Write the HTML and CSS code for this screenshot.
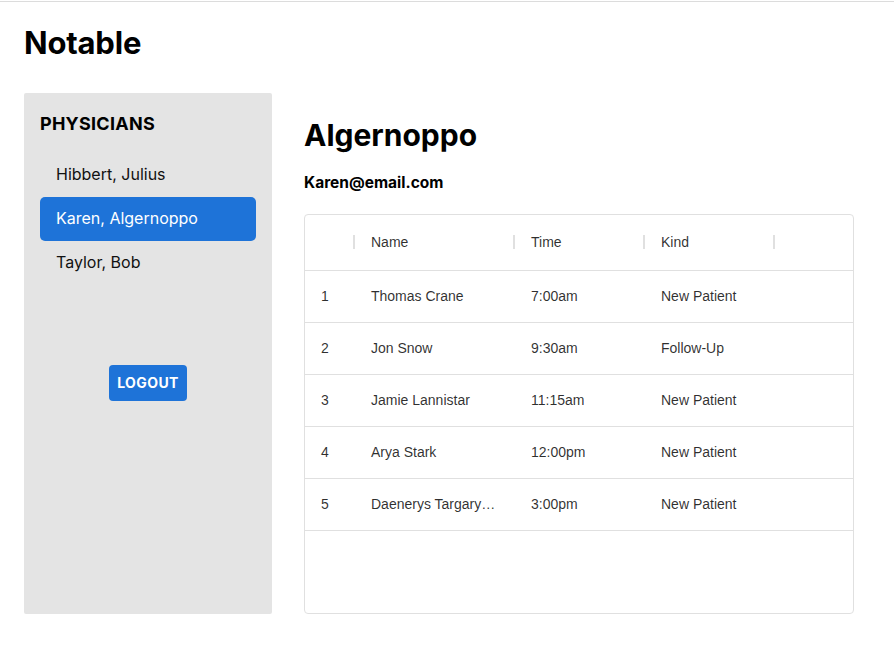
FILE: index.html
```html
<!DOCTYPE html>
<html>
<head>
<meta charset="utf-8">
<link rel="stylesheet" href="styles.css">
</head>
<body>
<div class="topline"></div>
<div class="page">
  <h1 class="brand">Notable</h1>
  <div class="layout">
    <aside class="sidebar">
      <h2 class="side-title">PHYSICIANS</h2>
      <ul class="phys-list">
        <li class="phys">Hibbert, Julius</li>
        <li class="phys active">Karen, Algernoppo</li>
        <li class="phys">Taylor, Bob</li>
      </ul>
      <div class="logout-wrap"><button class="logout">LOGOUT</button></div>
    </aside>
    <main class="main">
      <h2 class="doc-name">Algernoppo</h2>
      <div class="doc-email">Karen@email.com</div>
      <div class="grid">
        <div class="row head">
          <div class="cell c0"><span class="sep"></span></div>
          <div class="cell c1">Name<span class="sep"></span></div>
          <div class="cell c2">Time<span class="sep"></span></div>
          <div class="cell c3">Kind<span class="sep"></span></div>
        </div>
        <div class="row"><div class="cell c0">1</div><div class="cell c1">Thomas Crane</div><div class="cell c2">7:00am</div><div class="cell c3">New Patient</div></div>
        <div class="row"><div class="cell c0">2</div><div class="cell c1">Jon Snow</div><div class="cell c2">9:30am</div><div class="cell c3">Follow-Up</div></div>
        <div class="row"><div class="cell c0">3</div><div class="cell c1">Jamie Lannistar</div><div class="cell c2">11:15am</div><div class="cell c3">New Patient</div></div>
        <div class="row"><div class="cell c0">4</div><div class="cell c1">Arya Stark</div><div class="cell c2">12:00pm</div><div class="cell c3">New Patient</div></div>
        <div class="row"><div class="cell c0">5</div><div class="cell c1"><span class="ellip">Daenerys Targaryen</span></div><div class="cell c2">3:00pm</div><div class="cell c3">New Patient</div></div>
      </div>
    </main>
  </div>
</div>
</body>
</html>
```

FILE: styles.css
```css
* { box-sizing: border-box; }
html, body { margin: 0; padding: 0; background: #fff; }
body { font-family: Inter, "Noto Sans", sans-serif; color: #000; }
.topline { height: 2px; border-top: 1px solid #fff; border-bottom: 1px solid #dcdcdc; }
.page { padding: 0 24px; }
.brand { margin: 0; font-size: 31px; font-weight: 700; line-height: 36px; padding-top: 23px; height: 91px; letter-spacing: -0.2px; }
.layout { display: flex; gap: 32px; }
.sidebar { width: 248px; height: 521px; background: #e4e4e4; border-radius: 2px; padding: 16px 16px; }
.side-title { margin: 0; font-size: 18px; font-weight: 700; line-height: 28px; margin-top: 1px; margin-bottom: 15px; letter-spacing: 0.25px; }
.phys-list { list-style: none; margin: 0; padding: 0; }
.phys { height: 44px; line-height: 43px; padding-left: 16px; font-size: 16px; border-radius: 5px; color: #111; }
.phys.active { background: #1e73d8; color: #fff; }
.logout-wrap { display: flex; justify-content: center; margin-top: 80px; }
.logout { background: #1e73d8; color: #fff; border: none; border-radius: 4px; width: 78px; height: 36px; font-family: Inter, sans-serif; font-weight: 700; font-size: 14px; letter-spacing: 0.4px; padding: 0 0 1px; }
.main { flex: none; width: 550px; }
.doc-name { margin: 0; font-size: 30px; font-weight: 700; line-height: 40px; margin-top: 22px; }
.doc-email { font-size: 15.5px; font-weight: 700; line-height: 20px; margin-top: 18px; margin-bottom: 21px; }
.grid { border: 1px solid #e0e0e0; border-radius: 4px; height: 400px; font-family: "Liberation Sans", Arial, sans-serif; font-size: 14px; color: rgba(0,0,0,0.82); }
.row { display: flex; height: 52px; border-bottom: 1px solid #e0e0e0; align-items: center; }
.row.head { height: 56px; }
.cell { position: relative; padding-left: 16px; padding-bottom: 2px; height: 100%; display: flex; align-items: center; white-space: nowrap; overflow: hidden; }
.c0 { width: 50px; }
.c1 { width: 160px; }
.c2 { width: 130px; }
.c3 { width: 130px; }
.sep { position: absolute; right: 0; top: 20px; width: 2px; height: 14px; background: #e0e0e0; }
.ellip { display: block; max-width: 125px; overflow: hidden; text-overflow: ellipsis; }
```
